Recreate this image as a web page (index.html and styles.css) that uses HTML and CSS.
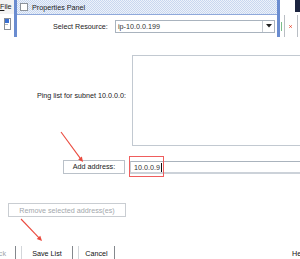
FILE: index.html
```html
<!DOCTYPE html>
<html lang="en">
<head>
    <meta charset="UTF-8">
    <meta name="viewport" content="width=device-width, initial-scale=1.0">
    <title>Ping List</title>
    <link rel="stylesheet" href="styles.css">
</head>
<body>
    <div class="screen">
        <div class="top">
            <div class="app-strip">
                <div class="menu"><u>F</u>ile</div>
                <div class="toolbar">
                    <svg width="7" height="12" viewBox="0 0 7 12">
                        <rect x="0.5" y="0.5" width="6" height="11" fill="#fff" stroke="#8a8f96"/>
                        <rect x="1" y="1" width="4" height="4" fill="#3a6fd0"/>
                        <rect x="1" y="6" width="3" height="1" fill="#b0b5bb"/>
                    </svg>
                </div>
            </div>
            <div class="panel">
                <div class="titlebar">
                    <span class="title-icon"></span>
                    <span class="title-text">Properties Panel</span>
                </div>
                <div class="panel-body">
                    <label class="field-label">Select Resource:</label>
                    <div class="combo">
                        <span class="combo-value">ip-10.0.0.199</span>
                        <span class="combo-btn">
                            <svg width="6" height="4" viewBox="0 0 6 4"><polygon points="0,0 6,0 3,3.5" fill="#222"/></svg>
                        </span>
                    </div>
                </div>
            </div>
            <div class="side-strip">
                <div class="side-head"><span class="side-dark"></span></div>
                <div class="side-tools">
                    <span class="side-green"></span>
                    <span class="side-line"></span>
                    <svg class="side-x" width="5" height="5" viewBox="0 0 5 5">
                        <path d="M0.5 0.5 L4.5 4.5 M4.5 0.5 L0.5 4.5" stroke="#e8452c" stroke-width="1.4"/>
                    </svg>
                    <span class="side-line"></span>
                </div>
            </div>
        </div>

        <div class="form">
            <div class="ping-row">
                <div class="ping-label">Ping list for subnet 10.0.0.0:</div>
                <div class="ping-list"></div>
            </div>

            <div class="add-row">
                <div class="add-label">Add address:</div>
                <div class="add-input">
                    <span class="add-value">10.0.0.9</span><span class="caret"></span>
                    <div class="highlight"></div>
                </div>
            </div>

            <div class="remove-row">
                <button class="remove-btn" disabled>Remove selected address(es)</button>
            </div>

            <div class="button-row">
                <button class="btn back" disabled>Back</button>
                <button class="btn">Save List</button>
                <button class="btn">Cancel</button>
                <button class="btn help">Help</button>
            </div>
        </div>

        <!-- annotation arrows -->
        <svg class="arrows" width="300" height="259" viewBox="0 0 300 259">
            <line x1="61" y1="132" x2="80.5" y2="158.6" stroke="#ea4a3e" stroke-width="1.1"/>
            <polygon points="83,162 81.9,156.6 78.1,159.4" fill="#ea4a3e"/>
            <line x1="21" y1="219" x2="39.5" y2="238.4" stroke="#ea4a3e" stroke-width="1.1"/>
            <polygon points="42,241 40.3,235.7 36.7,239.1" fill="#ea4a3e"/>
        </svg>
    </div>
</body>
</html>
```

FILE: styles.css
```css
* {
    box-sizing: border-box;
}
body {
    margin: 0;
    background: #fff;
    font-family: "Liberation Sans", Arial, sans-serif;
    font-size: 7.2px;
    color: #1a1a1a;
}
.screen {
    position: relative;
    width: 300px;
    height: 259px;
    overflow: hidden;
    background: #fff;
}
.top {
    display: flex;
    height: 37px;
}
.app-strip {
    width: 14px;
    flex-shrink: 0;
}
.menu {
    height: 14px;
    line-height: 13px;
    background: #f3f3f3;
    white-space: nowrap;
    overflow: hidden;
}
.toolbar {
    padding: 4px 0 0 4px;
}
.toolbar svg {
    display: block;
}
.panel {
    width: 266px;
    flex-shrink: 0;
    border-left: 3px solid #6a8cd0;
    border-right: 3px solid #6a8cd0;
}
.titlebar {
    display: flex;
    align-items: center;
    height: 15px;
    border-bottom: 1px solid #8fa9db;
    background-color: #dde7f5;
    background-image: repeating-conic-gradient(#c8d7ef 0 25%, #edf2fa 0 50%);
    background-size: 2px 2px;
}
.title-icon {
    width: 8px;
    height: 8px;
    margin-left: 3px;
    border: 1px solid #8d939b;
    background: #fff;
}
.title-text {
    margin-left: 4px;
    color: #1d1d1d;
}
.panel-body {
    display: flex;
    align-items: center;
    height: 22px;
    padding: 0 2px 0 36px;
}
.field-label {
    width: 62px;
}
.combo {
    display: flex;
    width: 160px;
    height: 13px;
    border: 1px solid #a9b3be;
    background: #fff;
}
.combo-value {
    flex: 1;
    padding-left: 2px;
    line-height: 11px;
    color: #333;
}
.combo-btn {
    display: flex;
    align-items: center;
    justify-content: center;
    width: 12px;
    border-left: 1px solid #c4cad1;
}
.side-strip {
    width: 20px;
    flex-shrink: 0;
}
.side-head {
    display: flex;
    justify-content: flex-end;
    height: 15px;
}
.side-dark {
    width: 5px;
    height: 12px;
    background: #1c2440;
}
.side-tools {
    display: flex;
    align-items: center;
    height: 22px;
    padding-left: 1px;
}
.side-green {
    width: 1px;
    height: 9px;
    background: #7bbf8a;
}
.side-line {
    width: 1px;
    height: 22px;
    margin: 0 2px;
    background: #b9bec4;
}
.side-x {
    margin: 0 3px;
}
.form {
    padding-top: 18px;
}
.ping-row {
    display: flex;
    height: 91px;
}
.ping-label {
    width: 126px;
    padding-top: 36px;
    line-height: 9px;
    text-align: right;
    white-space: nowrap;
}
.ping-list {
    flex: 1;
    margin: 0 -6px 0 6px;
    border: 1px solid #c2c9d1;
    background: #fff;
}
.add-row {
    display: flex;
    margin-top: 14px;
    height: 17px;
}
.add-label {
    width: 62px;
    height: 14px;
    margin-left: 63px;
    border: 1px solid #bac1c9;
    line-height: 12px;
    text-align: center;
}
.add-input {
    position: relative;
    display: flex;
    align-items: center;
    flex: 1;
    height: 13px;
    margin: 1px -6px 0 5px;
    padding-left: 3px;
    border-top: 1px solid #aab3bd;
    border-left: 1px solid #c8cfd6;
    border-bottom: 2px solid #ccd2d9;
}
.add-value {
    color: #333;
}
.caret {
    width: 1px;
    height: 9px;
    margin-left: 1px;
    background: #111;
}
.highlight {
    position: absolute;
    left: -2px;
    top: -6px;
    width: 35px;
    height: 21px;
    border: 1.5px solid #ef5d5d;
}
.remove-row {
    margin-top: 26px;
    padding-left: 8px;
}
.remove-btn {
    display: block;
    width: 118px;
    height: 14px;
    padding: 0;
    border: 1px solid #c9cdd2;
    background: #fff;
    font: inherit;
    color: #a3a7ac;
}
.button-row {
    display: flex;
    gap: 5px;
    margin-top: 29px;
}
.btn {
    height: 15px;
    padding: 0;
    border: none;
    border-left: 1px solid #d3d6da;
    border-right: 1px solid #84888d;
    border-bottom: 1px solid #84888d;
    background: #fff;
    font: inherit;
    color: #111;
}
.btn:nth-child(2) {
    width: 52px;
}
.btn:nth-child(3) {
    width: 37px;
}
.back {
    width: 36px;
    margin-left: -20px;
    color: #a0a4a8;
}
.help {
    width: 33px;
    margin: 0 -16px 0 auto;
    border-left: none;
    padding-left: 9px;
    text-align: left;
}
.arrows {
    position: absolute;
    left: 0;
    top: 0;
    pointer-events: none;
}
```
